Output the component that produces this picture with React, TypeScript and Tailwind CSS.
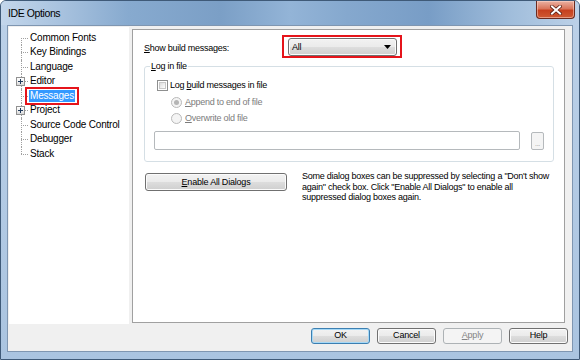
import React from "react";

const btnNormal =
  "flex items-center justify-center rounded-[3px] border border-[#707070] bg-[linear-gradient(180deg,#f2f2f2_0%,#ebebeb_48%,#dddddd_52%,#cfcfcf_100%)] shadow-[inset_0_0_0_1px_#fbfbfb] text-[9px] tracking-[-0.2px] text-black";

const treeItems: { label: string; exp?: boolean; sel?: boolean }[] = [
  { label: "Common Fonts" },
  { label: "Key Bindings" },
  { label: "Language" },
  { label: "Editor", exp: true },
  { label: "Messages", sel: true },
  { label: "Project", exp: true },
  { label: "Source Code Control" },
  { label: "Debugger" },
  { label: "Stack" },
];

function Expander() {
  return (
    <div className="absolute left-[7px] top-[calc(50%-4.5px)] flex h-[9px] w-[9px] items-center justify-center border border-[#919191] bg-[linear-gradient(180deg,#ffffff_0%,#f0f0f0_50%,#d8d8d8_100%)]">
      <svg width="5" height="5" viewBox="0 0 5 5">
        <path d="M0 2.5H5M2.5 0V5" stroke="#1e395b" strokeWidth="1" />
      </svg>
    </div>
  );
}

function Tree() {
  const last = treeItems.length - 1;
  return (
    <div className="h-[297px] w-[120px] shrink-0 bg-white pt-[3.5px] text-[10px] leading-[12px] tracking-[-0.2px] text-black">
      {treeItems.map((it, i) => (
        <div key={it.label} className="relative flex h-[14.5px] items-center">
          <div className="relative h-full w-[20px] shrink-0">
            {i === 0 ? (
              <div className="absolute bottom-0 left-[12px] top-1/2 w-0 border-l border-dotted border-[#a0a0a0]" />
            ) : i === last ? (
              <div className="absolute left-[12px] top-0 h-1/2 w-0 border-l border-dotted border-[#a0a0a0]" />
            ) : (
              <div className="absolute bottom-0 left-[12px] top-0 w-0 border-l border-dotted border-[#a0a0a0]" />
            )}
            <div className="absolute left-[12px] top-1/2 h-0 w-[7px] border-t border-dotted border-[#a0a0a0]" />
            {it.exp && <Expander />}
          </div>
          {it.sel ? (
            <span className="relative flex h-[12px] items-center bg-[#3399ff] px-[1px] text-white">
              {it.label}
              <span className="absolute -bottom-[3px] -left-[4px] -right-[4px] -top-[3px] border-2 border-[#e5141b]" />
            </span>
          ) : (
            <span className="px-[1px]">{it.label}</span>
          )}
        </div>
      ))}
    </div>
  );
}

function Checkbox() {
  return (
    <div className="h-[11px] w-[11px] shrink-0 border border-[#8e8f8f] bg-white p-[1px]">
      <div className="h-full w-full border border-[#c8c8c8] bg-[linear-gradient(135deg,#dcdcdc_0%,#f4f4f4_70%,#ffffff_100%)]" />
    </div>
  );
}

function Radio({ checked }: { checked?: boolean }) {
  return (
    <div className="flex h-[11px] w-[11px] shrink-0 items-center justify-center rounded-full border border-[#b9b9b9] bg-[#f4f4f4]">
      {checked && <div className="h-[5px] w-[5px] rounded-full bg-[#b5b5b5]" />}
    </div>
  );
}

function RightPanel() {
  return (
    <div className="mt-[2px] ml-[3px] flex h-[294px] w-[433px] flex-col border border-[#a0a0a0] bg-white text-[9px] leading-[11px] tracking-[-0.25px] text-black">
      {/* Show build messages row */}
      <div className="mt-[5px] flex items-start pl-[11px]">
        <div className="w-[138px] pt-[8px]">
          <span className="underline underline-offset-[1px]">S</span>how build messages:
        </div>
        <div className="flex h-[23px] w-[120px] items-start border-2 border-[#e5141b] pt-[1px] pl-[4px]">
          <div className="flex h-[18px] w-[109px] items-center justify-between rounded-[3px] border border-[#707070] bg-[linear-gradient(180deg,#f2f2f2_0%,#ebebeb_48%,#dddddd_52%,#cfcfcf_100%)] pl-[3px] pr-[5px] shadow-[inset_0_0_0_1px_#fbfbfb]">
            <span>All</span>
            <svg width="7" height="4" viewBox="0 0 7 4">
              <path d="M0 0H7L3.5 4Z" fill="#000" />
            </svg>
          </div>
        </div>
      </div>

      {/* Group box */}
      <div className="relative mt-[8px] ml-[11px] h-[96px] w-[410px] rounded-[3px] border border-[#d5dfe5]">
        <div className="absolute left-[5px] top-[-6px] bg-white px-[1px]">
          <span className="underline underline-offset-[1px]">L</span>og in file
        </div>
        <div className="mt-[13px] flex items-center gap-[2px] pl-[12px]">
          <Checkbox />
          <span>
            Log <span className="underline underline-offset-[1px]">b</span>uild messages in file
          </span>
        </div>
        <div className="mt-[6px] flex items-center gap-[3px] pl-[26px] text-[#7c7c7c]">
          <Radio checked />
          <span>
            <span className="underline underline-offset-[1px]">A</span>ppend to end of file
          </span>
        </div>
        <div className="mt-[5px] flex items-center gap-[3px] pl-[26px] text-[#7c7c7c]">
          <Radio />
          <span>
            <span className="underline underline-offset-[1px]">O</span>verwrite old file
          </span>
        </div>
        <div className="mt-[7px] flex items-start pl-[9px]">
          <div className="h-[19px] w-[366px] rounded-[2px] border border-[#b5b9bc] bg-white" />
          <div className="ml-[11px] mt-[1px] flex h-[18px] w-[13px] items-end justify-center rounded-[2px] border border-[#b5b9bc] bg-[#f4f4f4] pb-[2px] text-[7px] leading-[7px] text-[#9a9a9a]">
            ...
          </div>
        </div>
      </div>

      {/* Enable All Dialogs row */}
      <div className="mt-[9px] flex items-start pl-[12px]">
        <div className={`${btnNormal} mt-[2px] h-[18px] w-[142px]`}>
          <span>
            <span className="underline underline-offset-[1px]">E</span>nable All Dialogs
          </span>
        </div>
        <div className="ml-[15px] leading-[10.5px]">
          Some dialog boxes can be suppressed by selecting a "Don't show
          <br />
          again" check box. Click "Enable All Dialogs" to enable all
          <br />
          suppressed dialog boxes again.
        </div>
      </div>
    </div>
  );
}

export default function App() {
  return (
    <div className="relative flex h-[360px] w-[580px] flex-col overflow-hidden rounded-t-[6px] border border-[#3f5a78] bg-[linear-gradient(180deg,#bcd1e8_0%,#aac4e0_100%)] font-['Liberation_Sans',Arial,sans-serif]">
      {/* Title bar */}
      <div className="flex h-[24px] shrink-0 items-center bg-[linear-gradient(90deg,#c3d6eb_0%,#a9c3df_10%,#87aacf_22%,#7b9fc6_38%,#93b4d7_50%,#85a8ce_60%,#789dc6_74%,#a0bddb_88%,#bcd1e8_100%)] pl-[7px] pt-[2px]">
        <span className="text-[10.5px] tracking-[-0.4px] text-black">IDE Options</span>
      </div>
      <div className="absolute right-[4px] top-0 flex h-[18px] w-[39px] items-center justify-center rounded-b-[4px] border border-t-0 border-[#6b2a1f] bg-[linear-gradient(180deg,#eab2a3_0%,#d9755b_45%,#c6401f_55%,#cf5a33_100%)] shadow-[inset_0_0_0_1px_rgba(255,220,210,0.5)]">
        <svg width="12" height="10" viewBox="0 0 12 10">
          <path d="M2 1.5L10 8.5M10 1.5L2 8.5" stroke="#5a1f14" strokeWidth="3.6" strokeLinecap="square" />
          <path d="M2 1.5L10 8.5M10 1.5L2 8.5" stroke="#ffffff" strokeWidth="2" strokeLinecap="square" />
        </svg>
      </div>

      {/* Body */}
      <div className="flex flex-1 px-[6px] pb-[7px]">
        <div className="flex flex-1 flex-col border border-[#7f96b1] bg-[#f0f0f0]">
          <div className="flex h-[298px] pt-[1px] pl-[1px]">
            <Tree />
            <RightPanel />
          </div>
          <div className="mt-[4px] flex justify-end gap-[7px] pr-[4px]">
            <div className="flex h-[16px] w-[59px] items-center justify-center rounded-[3px] border border-[#3c7fb1] bg-[linear-gradient(180deg,#f2f2f2_0%,#ebebeb_48%,#dddddd_52%,#cfcfcf_100%)] text-[9px] tracking-[-0.2px] text-black shadow-[inset_0_0_0_1px_#a6d9f7]">
              OK
            </div>
            <div className={`${btnNormal} h-[16px] w-[59px]`}>Cancel</div>
            <div className="flex h-[16px] w-[59px] items-center justify-center rounded-[3px] border border-[#adb2b5] bg-[#f4f4f4] text-[9px] tracking-[-0.2px] text-[#838383]">
              <span>
                <span className="underline underline-offset-[1px]">A</span>pply
              </span>
            </div>
            <div className={`${btnNormal} h-[16px] w-[59px]`}>Help</div>
          </div>
        </div>
      </div>
    </div>
  );
}
